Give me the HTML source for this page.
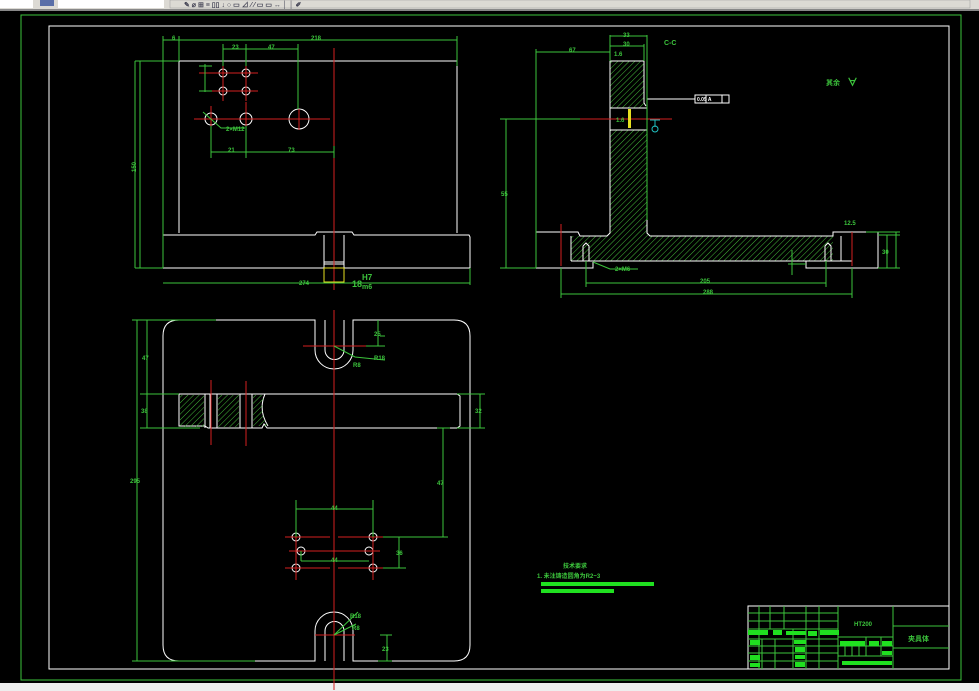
<!DOCTYPE html>
<html><head><meta charset="utf-8"><style>
html,body{margin:0;padding:0;background:#000;}
svg{display:block}
text{font-family:"Liberation Sans","Noto Sans CJK SC",sans-serif;font-weight:bold;}
</style></head><body>
<svg width="979" height="691" viewBox="0 0 979 691" xmlns="http://www.w3.org/2000/svg">
<defs>
<pattern id="h" width="4" height="4" patternUnits="userSpaceOnUse" patternTransform="rotate(45)">
<line x1="0" y1="0" x2="0" y2="4" stroke="#44b83a" stroke-width="1"/>
</pattern>
</defs>
<rect width="979" height="691" fill="#000"/>
<!-- toolbar -->
<rect x="0" y="0" width="979" height="9" fill="#dcdad4"/>
<rect x="0" y="0" width="33" height="8" fill="#fff"/>
<rect x="40" y="0" width="14" height="6" fill="#5a6fa8"/>
<rect x="58" y="0" width="106" height="8" fill="#fff"/>
<rect x="170" y="0" width="800" height="8" fill="#dcdad4" stroke="#999" stroke-width="0.5"/>
<g fill="#445" font-size="7"><text x="184" y="7">✎ ⌀ ⊞ ≡ ▯▯ ↓ ○ ▭ ⊿  ⁄   ⁄  ▭ ▭  ↔  │  │   ✐</text></g>
<rect x="0" y="9" width="979" height="2" fill="#888"/>
<rect x="0" y="683" width="979" height="8" fill="#eeeeee"/>
<!-- frames -->
<rect x="21" y="15" width="940" height="665" fill="none" stroke="#3cc43c" stroke-width="1"/>
<rect x="49" y="26" width="900" height="643" fill="none" stroke="#fff" stroke-width="1"/>

<!-- ===== top-left view ===== -->
<g fill="none" stroke="#fff" stroke-width="1">
<path d="M179 233 V61 H457 V233"/>
<path d="M163 268 V235 H315 L317 232 H352 L354 235 H469 L470 237 V268 H163"/>
<path d="M324 235 V268 M344 235 V268 M324 262 H344 M324 264 H344"/>
<circle cx="223" cy="73" r="4"/><circle cx="246" cy="73" r="4"/>
<circle cx="223" cy="91" r="4"/><circle cx="246" cy="91" r="4"/>
<circle cx="211" cy="119" r="6"/><circle cx="246" cy="119" r="6"/>
<circle cx="299" cy="119" r="10"/>
</g>
<g stroke="#d42020" stroke-width="1">
<path d="M334 48 V290"/>
<path d="M199 73 H258 M199 91 H258 M223 63 V101 M246 63 V101"/>
<path d="M194 119 H330 M211 106 V138 M246 102 V138 M299 109 V130"/>
</g>
<g stroke="#3cc43c" stroke-width="1" fill="none">
<path d="M163 36 V268 M457 36 V66 M163 40 H457 M179 36 V61"/>
<path d="M223 44 V66 M246 44 V66 M298 44 V109 M223 49 H298"/>
<path d="M199 66 H212 M199 91 H212 M205 64 V92"/>
<path d="M211 126 V158 M246 126 V158 M334 146 V158 M211 152 H334"/>
<path d="M135 61 H179 M135 268 H163 M135 61 V268 M140 61 V268"/>
<path d="M163 283 H470 M470 268 V285"/>
<path d="M203 112 L221 128 H245"/>
</g>
<g fill="#3cc43c" font-size="6">
<text x="172" y="40">6</text><text x="311" y="40">218</text><text x="232" y="49">23</text><text x="268" y="49">47</text>
<text x="226" y="131">2×M12</text><text x="228" y="152">21</text><text x="288" y="152">73</text>
<text x="128" y="170" transform="rotate(-90 133 167)">150</text>
<text x="299" y="285">274</text>
</g>
<rect x="324" y="268" width="20" height="14" fill="none" stroke="#e6e020"/>
<g fill="#3cc43c"><text x="352" y="287" font-size="9">18</text><text x="362" y="280" font-size="8">H7</text><text x="362" y="289" font-size="7">m6</text></g>

<!-- ===== right view C-C ===== -->
<path d="M610 61 H644 V108 H610 Z M610 130 H647 V233 L650 236 H833 V261 H571 V236 H607 L610 233 Z" fill="url(#h)"/>
<g fill="none" stroke="#fff" stroke-width="1">
<path d="M610 61 H644 V103 L646 106 M610 61 V233 L607 236 H580 L578 232 H536 V268 H593 V262 M647 108 V233 L650 236 H833 V232 H866 M878 232 V268 H806 V261"/>
<path d="M610 108 H647 M610 130 H647 M571 261 H852 M571 236 V261 M841 236 V261"/>
<path d="M583 246 L586 243 L589 246 V261 M583 246 V261"/>
<path d="M825 246 L828 243 L831 246 V261 M825 246 V261"/>
<path d="M647 99 H695 M695 95 H729 V103 H695 Z M706 95 V103 M722 95 V103"/>
</g>
<g stroke="#d42020"><path d="M580 119 H672 M561 224 V266 M852 232 V266"/></g>
<g stroke="#3cc43c" fill="none">
<path d="M610 35 V61 M647 35 V220 M610 36 H647 M610 46 H644 M644 44 V61"/>
<path d="M536 49 V268 M536 52 H610"/>
<path d="M500 119 H580 M506 119 V268 M500 268 H536"/>
<path d="M586 261 V287 M826 261 V287 M586 283 H826 M561 268 V298 M852 268 V298 M561 294 H852"/>
<path d="M866 232 H900 M878 235 H900 M887 235 V268 M896 232 V268 M878 268 H900"/>
<path d="M792 250 V275 M788 264 H806"/>
<path d="M593 262 L610 269 H638"/>
</g>
<g fill="#3cc43c" font-size="6">
<text x="623" y="37">33</text><text x="623" y="46">30</text><text x="569" y="52">67</text>
<text x="664" y="45" font-size="7">C-C</text>
<text x="614" y="56">1.6</text><text x="616" y="122">1.6</text>
<text x="501" y="196">55</text><text x="700" y="283">205</text><text x="703" y="294">288</text>
<text x="615" y="271">2×M6</text><text x="844" y="225">12.5</text><text x="882" y="254">30</text>
<text x="826" y="85" font-size="7">其余</text><text x="847" y="86" font-size="11">∀</text>
<text x="697" y="101" font-size="5" fill="#fff">0.05 A</text>
</g>
<rect x="628" y="109" width="3" height="19" fill="#e6e020"/>
<path d="M650 120 H660 M655 120 V127" stroke="#20c0c0"/><circle cx="655" cy="129" r="3" fill="none" stroke="#20c0c0"/>

<!-- ===== bottom view ===== -->
<g fill="none" stroke="#fff" stroke-width="1">
<path d="M315 320 H179 Q163 320 163 336 V645 Q163 661 179 661 H315 V631 A19 19 0 0 1 353 631 V661 H454 Q470 661 470 645 V336 Q470 320 454 320 H353 V350 A19 19 0 0 1 315 350 Z"/>
<path d="M325 320 V350 A9 9 0 0 0 344 350 V320 M325 661 V631 A9 9 0 0 1 344 631 V661"/>
<path d="M179 394 H457 L460 396 V426 L457 428 H267 L264 424 L262 428 H208 L205 426 H179 Z"/>
<path d="M205 394 V428 M210 394 V428 M217 394 V428 M240 394 V428 M252 394 V428 M265 394 Q258 410 268 426"/>
<circle cx="296" cy="537" r="4"/><circle cx="373" cy="537" r="4"/>
<circle cx="301" cy="551" r="4"/><circle cx="369" cy="551" r="4"/>
<circle cx="296" cy="568" r="4"/><circle cx="373" cy="568" r="4"/>
</g>
<path d="M180 395 H204 V427 H180 Z M218 395 H239 V427 H218 Z M253 395 H265 Q258 410 268 426 H253 Z" fill="url(#h)"/>
<g stroke="#d42020">
<path d="M334 310 V690 M303 346 H366 M315 635 H355"/>
<path d="M211 380 V445 M246 381 V446"/>
<path d="M285 537 H330 M338 537 H383 M289 551 H380 M285 568 H330 M338 568 H383"/>
<path d="M296 520 V580 M373 520 V580"/>
</g>
<g stroke="#3cc43c" fill="none">
<path d="M137 320 V661 M147 320 V428 M132 320 H216 M132 661 H255 M140 394 H179 M140 428 H200"/>
<path d="M380 336 H385 M378 320 V346 M366 346 H385"/>
<path d="M457 394 H485 M457 428 H485 M480 394 V428"/>
<path d="M437 428 H450 M443 428 V537 M383 537 H448 M399 537 V568 M383 568 H406"/>
<path d="M296 500 V537 M373 500 V537 M296 509 H373 M301 551 V561 M369 561 H301"/>
<path d="M334 346 L355 357 L385 360 M334 635 L358 612 M334 635 L356 624"/>
<path d="M380 635 H392 M387 635 V661 M378 661 H392"/>
</g>
<g fill="#3cc43c" font-size="6">
<text x="142" y="360">47</text><text x="141" y="413">38</text><text x="130" y="483">295</text>
<text x="374" y="336">25</text><text x="374" y="360">R18</text><text x="353" y="367">R8</text>
<text x="475" y="413">32</text><text x="437" y="485">47</text>
<text x="331" y="510">44</text><text x="331" y="562">44</text><text x="396" y="555">36</text>
<text x="350" y="618">R18</text><text x="352" y="630">R8</text><text x="382" y="651">23</text>
</g>

<!-- notes -->
<g fill="#3cc43c" font-size="6">
<text x="563" y="568">技术要求</text>
<text x="537" y="578">1. 未注铸造圆角为R2~3</text>
</g>
<rect x="541" y="582" width="113" height="4" fill="#20e020"/>
<rect x="541" y="589" width="73" height="4" fill="#20e020"/>

<!-- title block -->
<rect x="748" y="606" width="201" height="63" fill="none" stroke="#fff"/>
<g stroke="#3cc43c" fill="none">
<path d="M838 606 V669 M893 606 V669 M893 626 H949 M893 648 H949"/>
<path d="M748 613 H838 M748 621 H838 M748 629 H838 M748 639 H838 M748 646 H838 M748 653 H838 M748 661 H838"/>
<path d="M759 606 V669 M770 606 V629 M784 606 V629 M806 606 V669 M819 606 V669 M762 639 V669 M775 639 V669 M793 629 V669"/>
<path d="M838 637 H893 M838 646 H893 M838 656 H893 M866 637 V656 M881 637 V656 M845 646 V656 M852 646 V656 M859 646 V656"/>
</g>
<g fill="#20e020">
<rect x="748" y="630" width="20" height="5"/><rect x="773" y="630" width="9" height="5"/><rect x="786" y="631" width="20" height="4"/><rect x="808" y="631" width="9" height="5"/><rect x="820" y="630" width="19" height="5"/>
<rect x="750" y="640" width="10" height="5"/><rect x="794" y="640" width="12" height="4"/>
<rect x="795" y="647" width="10" height="5"/><rect x="750" y="655" width="10" height="5"/><rect x="795" y="655" width="10" height="4"/>
<rect x="750" y="663" width="10" height="4"/><rect x="795" y="662" width="10" height="5"/>
<rect x="840" y="641" width="25" height="5"/><rect x="869" y="641" width="10" height="5"/><rect x="882" y="641" width="10" height="5"/>
<rect x="882" y="651" width="10" height="4"/><rect x="842" y="661" width="50" height="4"/>
</g>
<g fill="#3cc43c" font-size="6">
<text x="854" y="626">HT200</text>
<text x="908" y="641" font-size="7">夹具体</text>
</g>
</svg>
</body></html>
